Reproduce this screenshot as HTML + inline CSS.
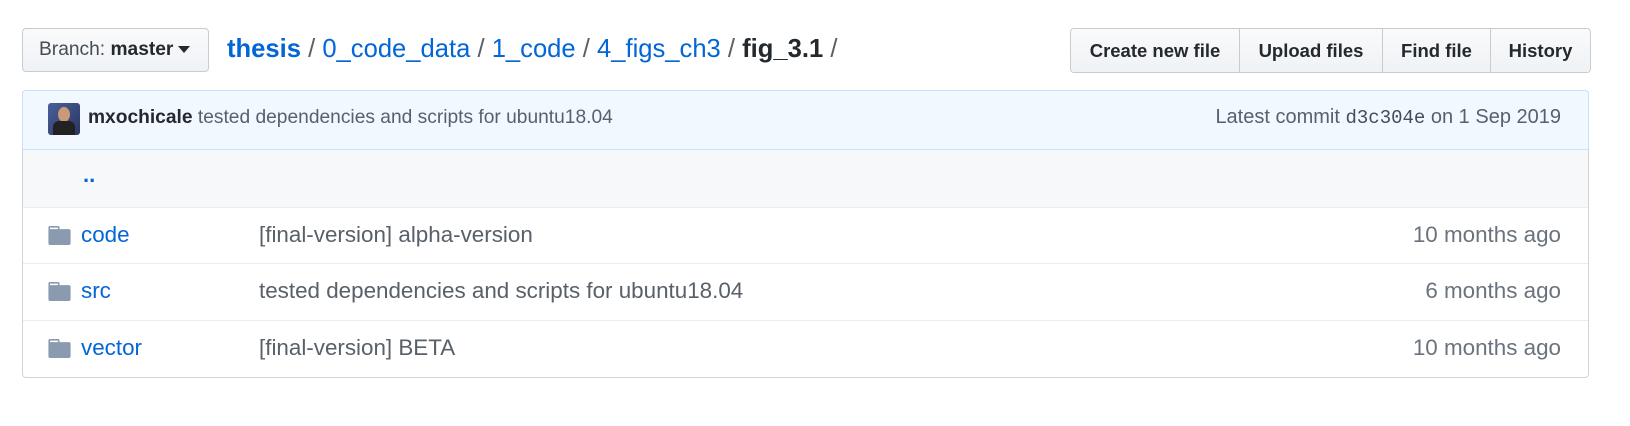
<!DOCTYPE html>
<html><head><meta charset="utf-8"><style>
*{box-sizing:border-box;margin:0;padding:0}
body{width:1630px;height:426px;background:#fff;font-family:"Liberation Sans",sans-serif;position:relative;overflow:hidden}
.abs{position:absolute}
.branch{left:22px;top:28px;width:187px;height:44px;border:1px solid #c8cbcf;border-radius:4px;background:linear-gradient(#f9fafb,#eff2f5);font-size:19.2px;color:#444d56;line-height:42px;padding-left:16px;white-space:nowrap}
.branch b{color:#24292e}
.caret{display:inline-block;width:0;height:0;border-left:6px solid transparent;border-right:6px solid transparent;border-top:7px solid #24292e;vertical-align:middle;margin-left:5px}
.crumb{left:227px;top:32px;font-size:25.6px;line-height:34px;color:#586069;white-space:nowrap}
.crumb a{color:#0366d6;text-decoration:none}
.btns{left:1070px;top:28px;height:45px;display:flex;border:1px solid #c8cbcf;border-radius:4px;overflow:hidden}
.btns div{height:43px;line-height:43px;font-size:18.5px;font-weight:bold;color:#24292e;background:linear-gradient(#f9fafb,#eff2f5);text-align:center;border-right:1px solid #c8cbcf;white-space:nowrap}
.btns div:last-child{border-right:none}
.box{left:22px;top:90px;width:1567px;height:288px;border:1px solid #d1d5da;border-radius:4px;overflow:hidden}
.hdr{position:absolute;left:0;top:0;right:0;height:59px;background:#f1f8ff;border-bottom:1px solid #c8e1ff;font-size:19.2px;color:#586069;white-space:nowrap}
.box-border{left:22px;top:90px;width:1567px;height:60px;border:1px solid #c8e1ff;border-bottom:none;border-radius:4px 4px 0 0}
.av{position:absolute;left:25px;top:12px;width:32px;height:32px;border-radius:3px;background:linear-gradient(135deg,#4a5f9a,#2a3560);overflow:hidden}
.row{position:absolute;left:0;right:0;height:57px;border-top:1px solid #eaecef;font-size:22.4px;white-space:nowrap}
.row .n{position:absolute;left:58px;top:14px;color:#0366d6}
.row .m{position:absolute;left:236px;top:14px;color:#586069}
.row .t{position:absolute;right:27px;top:14px;color:#6a737d}
.fold{position:absolute;left:25px;top:18px}
</style></head><body>
<div class="abs branch">Branch: <b>master</b><span class="caret"></span></div>
<div class="abs crumb"><a style="font-weight:bold">thesis</a> / <a>0_code_data</a> / <a>1_code</a> / <a>4_figs_ch3</a> / <b style="color:#24292e">fig_3.1</b> /</div>
<div class="abs btns"><div style="width:169px">Create new file</div><div style="width:143px">Upload files</div><div style="width:108px">Find file</div><div style="width:99px">History</div></div>
<div class="abs box">
 <div class="hdr">
  <div class="av"><div style="position:absolute;left:10px;top:4px;width:12px;height:15px;border-radius:50%;background:#c89a7a"></div><div style="position:absolute;left:5px;top:18px;width:22px;height:16px;border-radius:6px 6px 0 0;background:#222"></div></div>
  <div style="position:absolute;left:65px;top:16px"><b style="color:#24292e">mxochicale</b> tested dependencies and scripts for ubuntu18.04</div>
  <div style="position:absolute;right:27px;top:15px;font-size:20px">Latest commit <span style="font-family:'Liberation Mono',monospace;font-size:19px;color:#444d56">d3c304e</span> on 1 Sep 2019</div>
 </div>
 <div style="position:absolute;left:0;right:0;top:59px;height:58px;background:#f6f8fa"><span style="position:absolute;left:60px;top:12px;font-size:22px;font-weight:bold;color:#0366d6">..</span></div>
 <div class="row" style="top:116px"><svg class="fold" width="23" height="19" viewBox="0 0 14 12"><path d="M13 2H7V1c0-.7-.3-1-1-1H1C.4 0 0 .4 0 1v10c0 .6.4 1 1 1h12c.6 0 1-.4 1-1V3c0-.6-.4-1-1-1zM6 2H1V1h5v1z" fill="#8a9bb0"/></svg><span class="n">code</span><span class="m">[final-version] alpha-version</span><span class="t">10 months ago</span></div>
 <div class="row" style="top:172px"><svg class="fold" width="23" height="19" viewBox="0 0 14 12"><path d="M13 2H7V1c0-.7-.3-1-1-1H1C.4 0 0 .4 0 1v10c0 .6.4 1 1 1h12c.6 0 1-.4 1-1V3c0-.6-.4-1-1-1zM6 2H1V1h5v1z" fill="#8a9bb0"/></svg><span class="n">src</span><span class="m">tested dependencies and scripts for ubuntu18.04</span><span class="t">6 months ago</span></div>
 <div class="row" style="top:229px"><svg class="fold" width="23" height="19" viewBox="0 0 14 12"><path d="M13 2H7V1c0-.7-.3-1-1-1H1C.4 0 0 .4 0 1v10c0 .6.4 1 1 1h12c.6 0 1-.4 1-1V3c0-.6-.4-1-1-1zM6 2H1V1h5v1z" fill="#8a9bb0"/></svg><span class="n">vector</span><span class="m">[final-version] BETA</span><span class="t">10 months ago</span></div>
</div>
<div class="abs box-border"></div>
</body></html>
